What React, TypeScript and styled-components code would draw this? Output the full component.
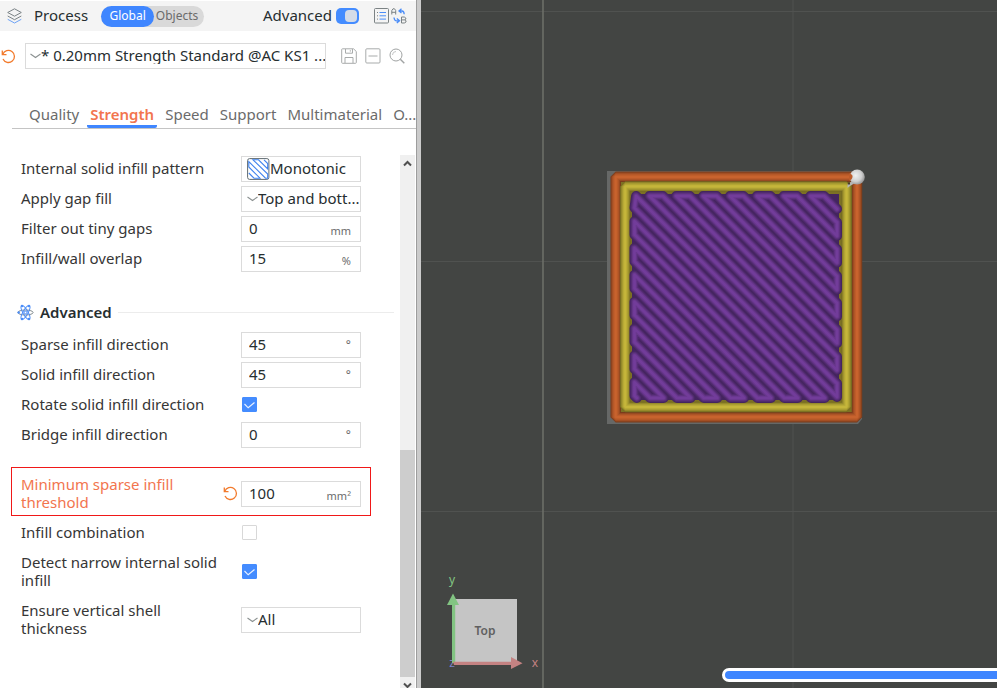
import React, { useState } from "react";
import styled, { createGlobalStyle, css } from "styled-components";

const GlobalStyle = createGlobalStyle`
  * { box-sizing: border-box; }
  html, body { margin: 0; height: 100%; }
  #root { height: 100%; }
  body, button, input, select {
    font-family: "Noto Sans", "Open Sans", sans-serif;
    font-size: 15px;
    line-height: 18px;
    color: #262e30;
  }
  button, input, select { margin: 0; padding: 0; border: 0; background: none; }
  svg { display: block; flex: none; }
`;

const Page = styled.div`
  display: grid;
  grid-template-columns: minmax(0, 421fr) minmax(0, 576fr);
  min-height: 100vh;
`;

const Panel = styled.aside`
  display: flex;
  flex-direction: column;
  min-width: 0;
  background: #fff;
  border-right: 4px solid #cbcbcb;
  box-shadow: inset -1px 0 #9d9d9d;
  padding-right: 1px;
`;

const Header = styled.header`
  display: flex;
  align-items: center;
  height: 31px;
  border-top: 1px solid #fff;
  padding: 0 9px 0 7px;
  background: #f4f4f4;
`;

const Title = styled.h1`
  margin: 0 13px 0 12px;
  padding-bottom: 2px;
  font-size: 15px;
  font-weight: 400;
`;

const Segments = styled.div`
  display: flex;
  height: 21px;
  border-radius: 11px;
  background: #d9d9d9;
`;

const Segment = styled.button<{ $active?: boolean }>`
  width: ${(p) => (p.$active ? 53 : 50)}px;
  border-radius: 11px;
  font-size: 12px;
  color: ${(p) => (p.$active ? "#fff" : "#6b6b6b")};
  background: ${(p) => (p.$active ? "#3f86ff" : "transparent")};
  padding-right: ${(p) => (p.$active ? 0 : 4)}px;
`;

const ModeLabel = styled.label`
  display: flex;
  align-items: center;
  gap: 4px;
  margin-left: auto;
  margin-right: 15px;
`;

const ModeText = styled.span`
  padding-bottom: 2px;
`;

const Switch = styled.input`
  appearance: none;
  display: flex;
  justify-content: flex-end;
  width: 23px;
  height: 16px;
  padding: 2px;
  border-radius: 5px;
  background: #448cff;
  &:not(:checked) { justify-content: flex-start; background: #bbb; }
  &::before {
    content: "";
    width: 12px;
    height: 12px;
    border-radius: 4px;
    background: #d5dce8;
  }
`;

const HeaderIcons = styled.div`
  display: flex;
  gap: 2px;
`;

const IconButton = styled.button`
  display: grid;
  place-items: center start;
`;

const PresetRow = styled.div`
  display: flex;
  align-items: center;
  margin-top: 12px;
  padding: 0 11px 0 1px;
`;

const PresetIcons = styled.div`
  display: flex;
  gap: 8px;
  margin-left: 15px;
`;

const frame = css`
  display: flex;
  align-items: center;
  min-width: 0;
  height: 26px;
  border: 1px solid #dbdbdb;
  background: #fff;
`;

const SelectFrame = styled.div<{ $grow?: boolean }>`
  ${frame}
  padding-left: ${(p) => (p.$grow ? 4 : 5)}px;
  ${(p) => p.$grow && css`flex: 1; margin-left: 9px;`}
`;

const Select = styled.select`
  appearance: none;
  flex: 1;
  min-width: 0;
  height: 24px;
  padding-bottom: 2px;
  overflow: hidden;
`;

const InputFrame = styled.div`
  ${frame}
  padding: 0 9px 0 7px;
`;

const NumberInput = styled.input`
  flex: 1;
  min-width: 0;
  width: 100%;
  height: 24px;
  padding-bottom: 2px;
`;

const Unit = styled.span<{ $raised?: boolean }>`
  padding-top: ${(p) => (p.$raised ? 0 : 4)}px;
  font-size: ${(p) => (p.$raised ? 12 : 11)}px;
  color: #6b6b6b;
`;

const Tabs = styled.nav`
  display: flex;
  gap: 5px;
  height: 29px;
  margin: 31px 0 0 12px;
  padding-left: 14px;
  border-bottom: 1px solid #c4c4c4;
`;

const Tab = styled.button<{ $active?: boolean }>`
  flex: none;
  padding: 2px 3px 0;
  border-bottom: 3px solid ${(p) => (p.$active ? "#3f86ff" : "transparent")};
  border-radius: 2px;
  font-weight: ${(p) => (p.$active ? 600 : 400)};
  color: ${(p) => (p.$active ? "#f2754e" : "#6b6b6b")};
  &:last-child { padding-right: 0; }
`;

const Body = styled.div`
  display: flex;
  flex: 1;
  margin-top: 25px;
`;

const Settings = styled.form`
  flex: 1;
  min-width: 0;
`;

const Group = styled.section`
  display: flex;
  flex-direction: column;
`;

const Row = styled.div<{ $spaced?: boolean }>`
  position: relative;
  display: grid;
  grid-template-columns: minmax(0, 202px) 18px 120px;
  align-items: center;
  padding: 5px 0 7px 21px;
  min-height: 30px;
  margin-top: ${(p) => (p.$spaced ? 20 : 0)}px;
`;

const RowLabel = styled.label<{ $changed?: boolean }>`
  color: ${(p) => (p.$changed ? "#f2754e" : "#363636")};
`;

const Field = styled.div<{ $framed: boolean }>`
  grid-column: 3;
  margin: ${(p) => (p.$framed ? "-3px 0 -5px" : "0")};
`;

const Highlight = styled.span`
  position: absolute;
  left: 11px;
  width: 360px;
  top: -3px;
  bottom: 2px;
  border: 1px solid #f01818;
  pointer-events: none;
`;

const Check = styled.input`
  appearance: none;
  display: block;
  width: 15px;
  height: 15px;
  margin: 0 0 0 1px;
  border: 1px solid #d8d8d8;
  border-radius: 1px;
  background: #fff;
  &:checked { border-color: #448cff; background: #448cff; }
`;

const CheckWrap = styled.span`
  display: grid;
  justify-content: start;
  align-items: center;
  & > * { grid-area: 1 / 1; }
  svg { margin-left: 1px; pointer-events: none; }
`;

const GroupTitle = styled.h2`
  display: flex;
  align-items: center;
  gap: 6px;
  height: 30px;
  margin: 23px 6px 3px 17px;
  font-size: 15px;
  font-weight: 600;
  &::after { content: ""; flex: 1; height: 1px; background: #ececec; }
`;

const ScrollBar = styled.div`
  display: flex;
  flex-direction: column;
  width: 15px;
  margin: 1px 1px 0 0;
  background: #f0f0f0;
`;

const ScrollArrow = styled.button`
  display: grid;
  place-items: center;
  height: 17px;
  overflow: hidden;
  &:last-child { height: 11px; place-items: end center; }
`;

const ScrollTrack = styled.div`
  flex: 1;
  display: flex;
  flex-direction: column;
  justify-content: flex-end;
`;

const ScrollThumb = styled.div`
  height: 45%;
  background: #cdcdcd;
`;

const Viewer = styled.main`
  position: relative;
  overflow: hidden;
  background: #434543;
`;

const Scene = styled.svg`
  width: 100%;
  height: 100%;
`;

const MoveSlider = styled.input`
  appearance: none;
  position: absolute;
  left: 301px;
  bottom: 6px;
  width: calc(100% - 281px);
  height: 14px;
  border: 3px solid #fff;
  border-radius: 7px;
  background: #3f86ff;
  &::-webkit-slider-thumb { appearance: none; width: 8px; height: 8px; }
`;

const Caret = () => (
  <svg width="11" height="8" viewBox="0 0 11 8" fill="none" stroke="#8b9191" strokeWidth="1.1">
    <path d="M.5 2 5.5 5.5 10.500 2" />
  </svg>
);

const Undo = () => (
  <svg width="15" height="15" viewBox="0 0 15 15" fill="none" stroke="#f27a2c" strokeWidth="1.3">
    <path d="M1.300 1.500v4.200h4.200M1.800 5.400A6 6 0 1 1 2 10" />
  </svg>
);

const Layers = () => (
  <svg width="15" height="16" viewBox="0 0 15 16" fill="none" strokeWidth="1" strokeLinejoin="round">
    <path d="M7.500.8 14.300 4.500 7.500 8.200.7 4.500Z" stroke="#7a8285" />
    <path d="m.7 8 6.800 3.700L14.300 8" stroke="#7a8285" />
    <path d="m.7 11.300 6.800 3.700 6.800-3.700" stroke="#6da2f5" />
  </svg>
);

const ListIcon = () => (
  <svg width="15" height="16" viewBox="0 0 15 16" fill="none">
    <rect x=".5" y=".5" width="14" height="14.500" rx="1" stroke="#7b8284" />
    <path d="M5.500 4.500H12M5.500 7.800H12M5.500 11.100H12" stroke="#4b8df8" />
    <path d="M3 4.500h1M3 7.800h1M3 11.100h1" stroke="#7b8284" />
  </svg>
);

const CompareIcon = () => (
  <svg width="16" height="16" viewBox="0 0 16 16" fill="none">
    <path d="M.8 6.500V2.500L2 .8h1.500l1.200 1.700v4M.8 4.300h3.900" stroke="#7b8284" />
    <path d="M10.500 9v6h2.800l1.700-1v-1.300l-1-.8 .8-.9V10l-1.500-1ZM10.500 11.900h3.500" stroke="#7b8284" />
    <path d="M10.500.8 8 3l2.500 2M8.500 3h2.500q2 0 2.200 3.200" stroke="#4b8df8" strokeWidth="1.300" />
    <path d="M5.800 10.500 8.500 12.800 5.800 15M8 12.800H5.200Q3.300 12.500 3 9.500" stroke="#4b8df8" strokeWidth="1.300" />
  </svg>
);

const SaveIcon = () => (
  <svg width="16" height="16" viewBox="0 0 16 16" fill="none" stroke="#a8abab">
    <path d="M1.500 .8h11L15.300 3.500V14.500q0 .8-.8.800H1.500q-.8 0-.8-.8V1.500q0-.7.8-.7ZM4.500 1v4.200h7V1M4 15V9.500h8V15M9.300 2.200v1.400" />
  </svg>
);

const MinusIcon = () => (
  <svg width="16" height="16" viewBox="0 0 16 16" fill="none" stroke="#a8abab">
    <rect x=".8" y=".8" width="14.200" height="14.200" rx="1" />
    <path d="M3.500 8h9" />
  </svg>
);

const SearchIcon = () => (
  <svg width="16" height="16" viewBox="0 0 16 16" fill="none" stroke="#a0a3a3">
    <circle cx="7" cy="7" r="6" />
    <path d="m11.300 11.300 4 4" strokeWidth="1.400" />
    <path d="M3.500 7A3.500 3.500 0 0 1 7 3.500" stroke="#c4c6c6" />
  </svg>
);

const PatternIcon = () => (
  <svg width="23" height="22" viewBox="0 0 23 22" fill="none">
    <rect x=".6" y=".6" width="21.300" height="20.800" rx="2" fill="#fff" stroke="#5f6a70" />
    <path
      d="M1.800 15 7 20.200H13L1.800 9V3.500L18.500 20.200H20.700V16L6 1.800H11.500L20.700 11V5.500L17 1.800"
      stroke="#3f82ee"
      strokeWidth="1.100"
    />
  </svg>
);

const AtomIcon = () => (
  <svg width="17" height="17" viewBox="0 0 17 17" fill="none" strokeWidth="1">
    <ellipse cx="8.500" cy="8.500" rx="7.600" ry="2.500" stroke="#7f898d" />
    <ellipse cx="8.500" cy="8.500" rx="7.600" ry="2.500" stroke="#4b8df8" transform="rotate(60 8.500 8.500)" />
    <ellipse cx="8.500" cy="8.500" rx="7.600" ry="2.500" stroke="#4b8df8" transform="rotate(120 8.500 8.500)" />
    <circle cx="8.500" cy="8.500" r="1.300" stroke="#4b8df8" />
    <g fill="#4b8df8">
      <circle cx="5" cy="2" r="1.300" />
      <circle cx="12" cy="2" r="1.300" />
      <circle cx="5" cy="15" r="1.300" />
      <circle cx="12" cy="15" r="1.300" />
      <circle cx="1.700" cy="8.500" r="1.200" />
    </g>
  </svg>
);

const Tick = () => (
  <svg width="15" height="15" viewBox="0 0 15 15" fill="none" stroke="#e8f1ff" strokeWidth="1.200">
    <path d="m2.500 7 3.700 3.800 6.300-5.300" />
  </svg>
);

const Arrow = ({ down }: { down?: boolean }) => (
  <svg width="9" height="7" viewBox="0 0 9 7" fill="none" stroke="#505050" strokeWidth="2">
    <path d={down ? "M1 2.500 4.500 6 8 2.500" : "M1 5.500 4.500 2 8 5.500"} />
  </svg>
);

type Setting = {
  id: string;
  label: string;
  kind: "number" | "select" | "pattern" | "check";
  value?: string;
  unit?: string;
  checked?: boolean;
  changed?: boolean;
};

const patternGroup: Setting[] = [
  { id: "pattern", label: "Internal solid infill pattern", kind: "pattern", value: "Monotonic" },
  { id: "gapfill", label: "Apply gap fill", kind: "select", value: "Top and bott..." },
  { id: "gaps", label: "Filter out tiny gaps", kind: "number", value: "0", unit: "mm" },
  { id: "overlap", label: "Infill/wall overlap", kind: "number", value: "15", unit: "%" },
];

const advancedGroup: Setting[] = [
  { id: "sparse", label: "Sparse infill direction", kind: "number", value: "45", unit: "°" },
  { id: "solid", label: "Solid infill direction", kind: "number", value: "45", unit: "°" },
  { id: "rotate", label: "Rotate solid infill direction", kind: "check", checked: true },
  { id: "bridge", label: "Bridge infill direction", kind: "number", value: "0", unit: "°" },
  { id: "threshold", label: "Minimum sparse infill threshold", kind: "number", value: "100", unit: "mm²", changed: true },
  { id: "combination", label: "Infill combination", kind: "check", checked: false },
  { id: "narrow", label: "Detect narrow internal solid infill", kind: "check", checked: true },
  { id: "shell", label: "Ensure vertical shell thickness", kind: "select", value: "All" },
];

function CheckField({ id, initial }: { id: string; initial: boolean }) {
  const [on, setOn] = useState(initial);
  return (
    <CheckWrap>
      <Check id={id} type="checkbox" checked={on} onChange={() => setOn(!on)} />
      {on && <Tick />}
    </CheckWrap>
  );
}

function SettingRow({ s }: { s: Setting }) {
  return (
    <Row $spaced={s.changed}>
      <RowLabel htmlFor={s.id} $changed={s.changed}>{s.label}</RowLabel>
      {s.changed && (
        <IconButton type="button" aria-label="Reset value"><Undo /></IconButton>
      )}
      <Field $framed={s.kind !== "check"}>
        {s.kind === "check" && <CheckField id={s.id} initial={!!s.checked} />}
        {s.kind === "number" && (
          <InputFrame>
            <NumberInput id={s.id} defaultValue={s.value} />
            <Unit $raised={s.unit === "°"}>{s.unit}</Unit>
          </InputFrame>
        )}
        {(s.kind === "select" || s.kind === "pattern") && (
          <SelectFrame>
            {s.kind === "pattern" ? <PatternIcon /> : <Caret />}
            <Select id={s.id}><option>{s.value}</option></Select>
          </SelectFrame>
        )}
      </Field>
      {s.changed && <Highlight />}
    </Row>
  );
}

// Serpentine solid infill: 45° passes joined alternately at each end.
const STEP = 13.42;
function infillPath() {
  const points: string[] = [];
  for (let k = -16; k <= 13; k++) {
    const c = 453.5 + STEP * k;
    const start = c >= 439 ? [c + 196, 196] : [634.5, 634.5 - c];
    const end = c + 398 <= 837 ? [c + 398, 398] : [837, 837 - c];
    const pair = k % 2 === 0 ? [end, start] : [start, end];
    pair.forEach((p) => points.push(p.map((n) => n.toFixed(1)).join(" ")));
  }
  return "M" + points.join("L");
}

const infill = infillPath();
const infillLayers: [number, string][] = [
  [10, "#44255f"], [8.2, "#4e2a6b"], [6.4, "#5a307b"], [4.6, "#68378c"], [2.6, "#723c9a"],
];
const wallLayers: [number, string][] = [
  [10.5, "#7a3c1c"], [8.6, "#984a22"], [6.6, "#ad5427"], [4.4, "#bd5c2a"], [2.2, "#c8632e"],
];
const innerLayers: [number, string][] = [
  [10.5, "#766c22"], [8.6, "#92862a"], [6.6, "#a69a30"], [4.4, "#b8aa36"], [2.2, "#c5b63b"],
];

function ModelView() {
  return (
    <Scene viewBox="421 0 576 688" preserveAspectRatio="xMinYMin slice" aria-label="Sliced model preview">
      <defs>
        <radialGradient id="nozzle" cx=".4" cy=".4" r=".65">
          <stop offset="0" stopColor="#f0f0f0" />
          <stop offset=".6" stopColor="#cfcfcf" />
          <stop offset="1" stopColor="#8e8e8e" />
        </radialGradient>
      </defs>
      <path d="M421 11.500H997M421 261.500H997M421 511.500H997M793 0V688" stroke="#505250" />
      <path d="M543 0V688" stroke="#6c6e68" strokeWidth="1.600" />
      <path d="M607 171H858L862 176V419L858 424H607Z" fill="#666867" />
      <path d="M616 177H857V417H616Z" fill="#7c7124" />
      {wallLayers.map(([w, c]) => (
        <rect key={w} x="615.700" y="176.800" width="241.300" height="240.400" fill="none" stroke={c} strokeWidth={w} strokeLinejoin="bevel" />
      ))}
      {innerLayers.map(([w, c]) => (
        <rect key={w} x="625.200" y="186.400" width="221.300" height="220.600" fill="none" stroke={c} strokeWidth={w} strokeLinejoin="bevel" />
      ))}
      <path d="M632 194H839V400H632Z" fill="#44255f" />
      {infillLayers.map(([w, c]) => (
        <path key={w} d={infill} fill="none" stroke={c} strokeWidth={w} strokeLinejoin="round" strokeLinecap="round" />
      ))}
      <path d="M852 181 847.500 184.500V188L850 186 855 183Z" fill="#b5b5b5" />
      <path d="M848 182.500h2v2h-2z" fill="#4b3a28" />
      <circle cx="857.200" cy="177" r="7.600" fill="url(#nozzle)" />
      <path d="M849 173.500q4 .5 3.500 3.500t-3.500 3.500Z" fill="#bd5c2a" />

      <path d="M455 599H517V663H455Z" fill="#c5c5c5" />
      <text x="485" y="635" textAnchor="middle" fontSize="12" fontWeight="600" fill="#606060">Top</text>
      <text x="452" y="667" textAnchor="middle" fontSize="12" fill="#7c82c8">z</text>
      <path d="M452 605h3.200V663H452Z" fill="#82c482" />
      <path d="M453 593.500 459 605H447Z" fill="#82c482" />
      <path d="M453 661.800H511V665H454Z" fill="#c48282" />
      <path d="M511 657 522.500 663.200 511 669Z" fill="#c48282" />
      <text x="452" y="584" textAnchor="middle" fontSize="12" fill="#82c482">y</text>
      <text x="535" y="667" textAnchor="middle" fontSize="12" fill="#c48282">x</text>
    </Scene>
  );
}

const tabs = ["Quality", "Strength", "Speed", "Support", "Multimaterial", "O..."];

export default function App() {
  const [tab, setTab] = useState("Strength");
  return (
    <Page>
      <GlobalStyle />
      <Panel>
        <Header>
          <Layers />
          <Title>Process</Title>
          <Segments>
            <Segment $active>Global</Segment>
            <Segment>Objects</Segment>
          </Segments>
          <ModeLabel>
            <ModeText>Advanced</ModeText>
            <Switch type="checkbox" role="switch" defaultChecked />
          </ModeLabel>
          <HeaderIcons>
            <IconButton aria-label="Setting list"><ListIcon /></IconButton>
            <IconButton aria-label="Compare presets"><CompareIcon /></IconButton>
          </HeaderIcons>
        </Header>
        <PresetRow>
          <IconButton aria-label="Reset preset"><Undo /></IconButton>
          <SelectFrame $grow>
            <Caret />
            <Select aria-label="Preset">
              <option>* 0.20mm Strength Standard @AC KS1 ...</option>
            </Select>
          </SelectFrame>
          <PresetIcons>
            <IconButton aria-label="Save preset"><SaveIcon /></IconButton>
            <IconButton aria-label="Delete preset"><MinusIcon /></IconButton>
            <IconButton aria-label="Search settings"><SearchIcon /></IconButton>
          </PresetIcons>
        </PresetRow>
        <Tabs>
          {tabs.map((t) => (
            <Tab key={t} $active={t === tab} onClick={() => setTab(t)}>{t}</Tab>
          ))}
        </Tabs>
        <Body>
          <Settings>
            <Group>
              {patternGroup.map((s) => <SettingRow key={s.id} s={s} />)}
            </Group>
            <Group>
              <GroupTitle><AtomIcon />Advanced</GroupTitle>
              {advancedGroup.map((s) => <SettingRow key={s.id} s={s} />)}
            </Group>
          </Settings>
          <ScrollBar>
            <ScrollArrow aria-label="Scroll up"><Arrow /></ScrollArrow>
            <ScrollTrack><ScrollThumb /></ScrollTrack>
            <ScrollArrow aria-label="Scroll down"><Arrow down /></ScrollArrow>
          </ScrollBar>
        </Body>
      </Panel>
      <Viewer>
        <ModelView />
        <MoveSlider type="range" aria-label="Move" defaultValue={100} />
      </Viewer>
    </Page>
  );
}
